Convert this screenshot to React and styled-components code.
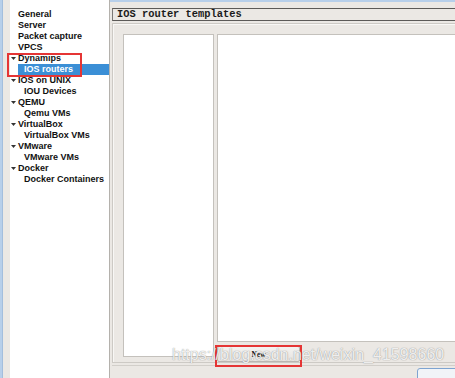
import React from "react";
import styled, { createGlobalStyle } from "styled-components";

const GlobalStyle = createGlobalStyle`
  html, body {
    margin: 0;
    padding: 0;
    background: #ebe8e4;
    overflow: hidden;
  }
`;

const Window = styled.div`
  position: relative;
  display: flex;
  width: 455px;
  height: 378px;
  overflow: hidden;
  background: #ebe8e4;
  font-family: "Liberation Sans", Arial, sans-serif;
`;

const Frame = styled.div`
  width: 3px;
  background: #b7cfea;
  border-right: 1px solid #a3bedd;
  box-sizing: border-box;
`;

const Sidebar = styled.div`
  padding-left: 7px;
  display: flex;
`;

const Tree = styled.div`
  width: 100px;
  background: #fff;
  border-right: 1px solid #b4b1ac;
  padding-top: 9px;
  box-sizing: border-box;
`;

const Row = styled.div`
  position: relative;
  height: 11px;
  line-height: 11px;
  font-size: 9px;
  font-weight: bold;
  white-space: nowrap;
  color: ${(p) => (p.$selected ? "#fff" : "#111")};
  background: ${(p) => (p.$selected ? "#3b8fd6" : "transparent")};
  margin-left: 8px;
  padding-left: ${(p) => (p.$child ? "6px" : "0")};
`;

const Arrow = styled.svg`
  position: absolute;
  left: -7px;
  top: 4px;
`;

const Main = styled.div`
  flex: 1;
  display: flex;
  flex-direction: column;
  border-top: 2px solid #b7cfea;
  padding: 6px 0 0 2px;
  min-width: 0;
`;

const TitleBar = styled.div`
  height: 11px;
  border-top: 1px solid #5c5a58;
  border-bottom: 1px solid #5c5a58;
  border-left: 1px solid #7a7875;
  padding-left: 4px;
  font-family: "Liberation Mono", "Courier New", monospace;
  font-weight: bold;
  font-size: 10.4px;
  line-height: 11px;
  color: #1a1a1a;
  white-space: nowrap;
`;

const Group = styled.div`
  margin-top: 2px;
  height: 346px;
  box-sizing: border-box;
  border: 1px solid #cdcac5;
  border-right: none;
  box-shadow: inset 1px 1px 0 #f8f7f5;
  padding: 10px 0 0 10px;
  display: flex;
  gap: 3px;
`;

const ListBox = styled.div`
  width: 91px;
  height: 323px;
  box-sizing: border-box;
  background: #fff;
  border: 1px solid #c4c1bc;
`;

const Column = styled.div`
  flex: 1;
  display: flex;
  flex-direction: column;
`;

const Editor = styled.div`
  height: 308px;
  box-sizing: border-box;
  background: #fff;
  border: 1px solid #c4c1bc;
  border-right: none;
`;

const ButtonRow = styled.div`
  display: flex;
  padding-top: 4px;
`;

const Button = styled.div`
  width: 83px;
  height: 16px;
  box-sizing: border-box;
  border: 1px solid #b9b6b1;
  border-radius: 2px;
  background: linear-gradient(#f4f3f1, #e6e3df);
  display: flex;
  align-items: center;
  justify-content: center;
  font-family: "Liberation Serif", "Times New Roman", serif;
  font-weight: bold;
  font-size: 7.5px;
  color: #111;
`;

const Footer = styled.div`
  margin-top: 2px;
  border-top: 1px solid #d2cfca;
  flex: 1;
  display: flex;
  justify-content: flex-end;
  padding-top: 2px;
`;

const OkButton = styled.div`
  width: 40px;
  height: 20px;
  border: 1px solid #7ea4d1;
  border-radius: 3px;
  background: #f1f4f8;
  margin-right: -4px;
`;

const Mark = styled.div`
  position: absolute;
  left: ${(p) => p.$x}px;
  top: ${(p) => p.$y}px;
  width: ${(p) => p.$w}px;
  height: ${(p) => p.$h}px;
  border: 2px solid #e53535;
  box-sizing: border-box;
  pointer-events: none;
`;

const Watermark = styled.div`
  position: absolute;
  left: 172px;
  top: 346px;
  font-family: "Liberation Sans", Arial, sans-serif;
  font-size: 16px;
  color: rgba(255, 255, 255, 0.85);
  text-shadow: 0 0 1px rgba(120, 120, 120, 0.55), 0 0 1px rgba(120, 120, 120, 0.55);
  white-space: nowrap;
  pointer-events: none;
`;

const tree = [
  { label: "General" },
  { label: "Server" },
  { label: "Packet capture" },
  { label: "VPCS" },
  { label: "Dynamips", open: true },
  { label: "IOS routers", child: true, selected: true },
  { label: "IOS on UNIX", open: true },
  { label: "IOU Devices", child: true },
  { label: "QEMU", open: true },
  { label: "Qemu VMs", child: true },
  { label: "VirtualBox", open: true },
  { label: "VirtualBox VMs", child: true },
  { label: "VMware", open: true },
  { label: "VMware VMs", child: true },
  { label: "Docker", open: true },
  { label: "Docker Containers", child: true },
];

export default function App() {
  return (
    <Window>
      <GlobalStyle />
      <Frame />
      <Sidebar>
        <Tree>
          {tree.map((item) => (
            <Row key={item.label} $child={item.child} $selected={item.selected}>
              {item.open && (
                <Arrow width="5" height="3" viewBox="0 0 5 3">
                  <path d="M0 0 L5 0 L2.5 3 Z" fill="#333" />
                </Arrow>
              )}
              {item.label}
            </Row>
          ))}
        </Tree>
      </Sidebar>
      <Main>
        <TitleBar>IOS router templates</TitleBar>
        <Group>
          <ListBox />
          <Column>
            <Editor />
            <ButtonRow>
              <Button>New</Button>
            </ButtonRow>
          </Column>
        </Group>
        <Footer>
          <OkButton />
        </Footer>
      </Main>
      <Mark $x={7} $y={53} $w={75} $h={24} />
      <Mark $x={215} $y={345} $w={87} $h={22} />
      <Watermark>https://blog.csdn.net/weixin_41598660</Watermark>
    </Window>
  );
}
